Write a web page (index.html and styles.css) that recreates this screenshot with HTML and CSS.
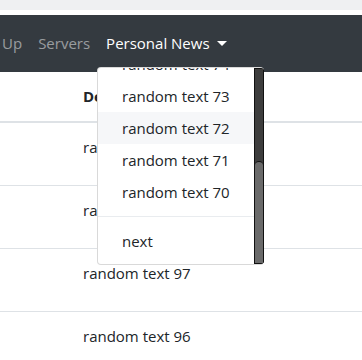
FILE: index.html
```html
<!DOCTYPE html>
<html lang="en">
<head>
    <meta charset="UTF-8">
    <meta name="viewport" content="width=device-width, initial-scale=1.0">
    <title>Personal News</title>
    <link rel="stylesheet" href="styles.css">
</head>
<body>
    <div class="topbar"></div>

    <nav class="navbar">
        <a class="nav-link">Up</a>
        <a class="nav-link">Servers</a>
        <a class="nav-link active dropdown-toggle">Personal News</a>
    </nav>

    <!-- dropdown menu, scrolled down a bit -->
    <div class="dropdown-menu">
        <div class="dropdown-list">
            <a class="dropdown-item">random text 74</a>
            <a class="dropdown-item">random text 73</a>
            <a class="dropdown-item hover">random text 72</a>
            <a class="dropdown-item">random text 71</a>
            <a class="dropdown-item">random text 70</a>
            <div class="dropdown-divider"></div>
            <a class="dropdown-item">next</a>
        </div>
        <div class="scrollbar">
            <div class="thumb"></div>
        </div>
    </div>

    <table class="news-table">
        <thead>
            <tr><th class="first"></th><th>Description</th></tr>
        </thead>
        <tbody>
            <tr><td class="first"></td><td>random text 99</td></tr>
            <tr><td class="first"></td><td>random text 98</td></tr>
            <tr><td class="first"></td><td>random text 97</td></tr>
            <tr><td class="first"></td><td>random text 96</td></tr>
        </tbody>
    </table>
</body>
</html>
```

FILE: styles.css
```css
body {
    margin: 0;
    font-family: "Open Sans", "Noto Sans", sans-serif;
    font-size: 15px;
    line-height: 24px;
    color: #212529;
    background: #fff;
    overflow: hidden;
}
.topbar {
    height: 10px;
    background-color: #eff0f2;
    margin-bottom: 5px;
}
.navbar {
    display: flex;
    align-items: center;
    height: 57px;
    margin-left: -6px;
    background-color: #343a40;
}
.nav-link {
    padding: 7px 8px 9px;
    color: rgba(255, 255, 255, 0.5);
    white-space: nowrap;
}
.nav-link.active {
    color: #fff;
}
.dropdown-toggle::after {
    content: "";
    display: inline-block;
    margin-left: 7px;
    vertical-align: 3px;
    border-top: 5px solid #fff;
    border-left: 5px solid transparent;
    border-right: 5px solid transparent;
}
.dropdown-menu {
    position: absolute;
    left: 97px;
    top: 67px;
    width: 167px;
    height: 198px;
    display: flex;
    background: #fff;
    border: 1px solid rgba(0, 0, 0, 0.15);
    border-right: none;
    border-radius: 4px;
    box-sizing: border-box;
    overflow: hidden;
}
.dropdown-list {
    flex: 1;
    margin-top: -20px;
    padding-bottom: 8px;
}
.dropdown-item {
    display: block;
    padding: 4px 24px;
    height: 24px;
    color: #212529;
    white-space: nowrap;
}
.dropdown-item.hover {
    background-color: #f6f7f9;
}
.dropdown-divider {
    margin: 8px 0;
    border-top: 1px solid #e9ecef;
}
.scrollbar {
    width: 10px;
    box-sizing: border-box;
    display: flex;
    flex-direction: column;
    justify-content: flex-end;
    background-color: #3d3d3d;
    border: 1px solid #111;
}
.thumb {
    height: 101px;
    background-color: #6a6a6a;
    border-top: 1px solid #111;
    border-radius: 4px 4px 0 0;
}
.news-table {
    width: 100%;
    border-collapse: collapse;
}
.news-table th,
.news-table td {
    text-align: left;
    vertical-align: top;
    padding: 12px 12px 13px;
    border-bottom: 1px solid #dee2e6;
}
.news-table th {
    height: 23px;
    font-weight: bold;
    border-bottom-width: 2px;
}
.news-table td {
    height: 37px;
}
.news-table .first {
    width: 47px;
}
```
